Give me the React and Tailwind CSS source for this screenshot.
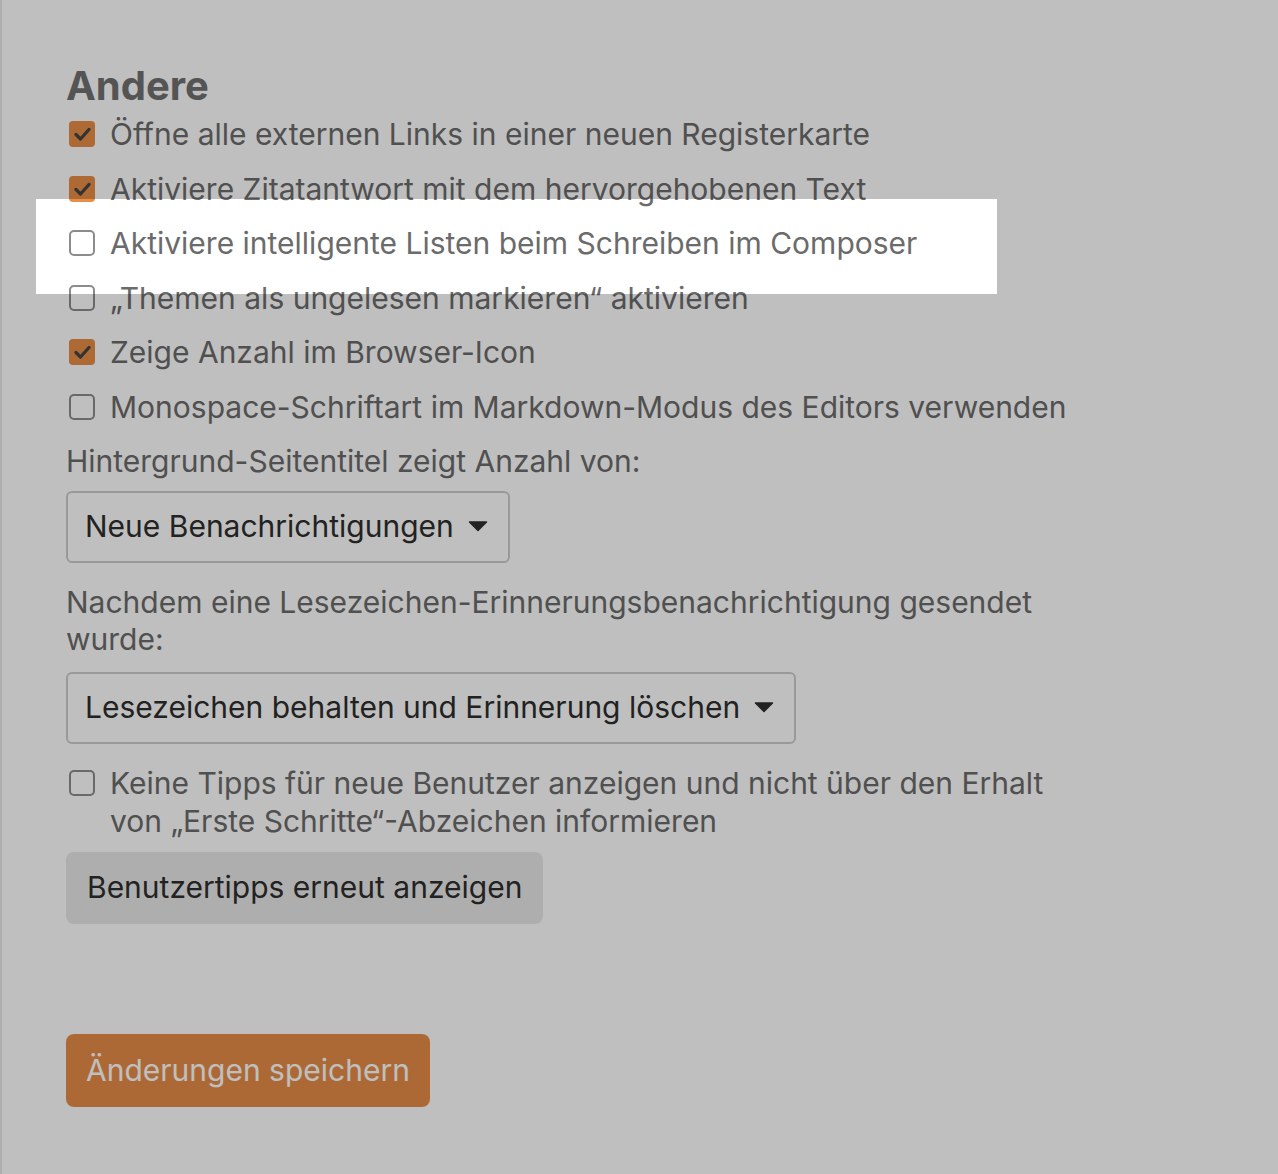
import React from "react";

const options = [
  { label: "Öffne alle externen Links in einer neuen Registerkarte", checked: true },
  { label: "Aktiviere Zitatantwort mit dem hervorgehobenen Text", checked: true },
  { label: "Aktiviere intelligente Listen beim Schreiben im Composer", checked: false, spotlight: true },
  { label: "„Themen als ungelesen markieren“ aktivieren", checked: false },
  { label: "Zeige Anzahl im Browser-Icon", checked: true },
  { label: "Monospace-Schriftart im Markdown-Modus des Editors verwenden", checked: false },
];

function Checkbox({ checked }) {
  if (checked) {
    return (
      <span className="mt-[6px] ml-[3px] flex h-[26px] w-[26px] shrink-0 items-center justify-center rounded-[4px] bg-[#e88e47]">
        <svg width="17" height="14" viewBox="0 0 17 14">
          <path d="M2 7.5 L6.5 12 L15 2.5" fill="none" stroke="#444" strokeWidth="3.2" strokeLinecap="round" strokeLinejoin="round" />
        </svg>
      </span>
    );
  }
  return (
    <span className="mt-[6px] ml-[3px] block h-[26px] w-[26px] shrink-0 rounded-[5px] border-2 border-[#8c8c8c] bg-white" />
  );
}

function Row({ label, checked, spotlight }) {
  return (
    <div className="relative flex items-start gap-[15px]">
      {spotlight && (
        <div className="pointer-events-none absolute -left-[30px] -top-[25px] z-10 h-[95px] w-[961px] shadow-[0_0_0_3000px_rgba(0,0,0,0.25)]" />
      )}
      <Checkbox checked={checked} />
      <span className="leading-[38px]">{label}</span>
    </div>
  );
}

function Select({ value }) {
  return (
    <div className="flex h-[72px] w-fit items-center gap-[14px] rounded-[6px] border-2 border-[#cdcdcd] bg-white pl-[17px] pr-[20px] text-[#2e2e2e]">
      <span>{value}</span>
      <svg width="20" height="11" viewBox="0 0 20 11">
        <path d="M1.5 1 L18.5 1 L10 9.5 Z" fill="#2e2e2e" stroke="#2e2e2e" strokeWidth="1.5" strokeLinejoin="round" />
      </svg>
    </div>
  );
}

export default function App() {
  return (
    <div
      className="min-h-screen border-l-2 border-[#eaeaea] bg-white text-[30px] text-[#6b6b6b]"
      style={{ fontFamily: "Inter, Roboto, 'Noto Sans', sans-serif" }}
    >
      <div className="w-[1072px] pl-[64px] pt-[61px]">
        <h2 className="text-[40px] font-bold leading-[50px] text-[#717171]">Andere</h2>

        <div className="mt-[4px] flex flex-col gap-[16.5px]">
          {options.map((o, i) => (
            <Row key={i} {...o} />
          ))}
        </div>

        <p className="mt-[16px] leading-[38px]">Hintergrund-Seitentitel zeigt Anzahl von:</p>
        <div className="mt-[11px]">
          <Select value="Neue Benachrichtigungen" />
        </div>

        <p className="mt-[21px] leading-[37px]">
          Nachdem eine Lesezeichen-Erinnerungsbenachrichtigung gesendet wurde:
        </p>
        <div className="mt-[14px]">
          <Select value="Lesezeichen behalten und Erinnerung löschen" />
        </div>

        <div className="mt-[20px] flex items-start gap-[15px]">
          <Checkbox checked={false} />
          <span className="leading-[38px]">
            Keine Tipps für neue Benutzer anzeigen und nicht über den Erhalt von „Erste Schritte“-Abzeichen informieren
          </span>
        </div>

        <button className="mt-[12px] h-[72px] rounded-[8px] bg-[#e9e9e9] px-[21px] text-[#2e2e2e]">
          Benutzertipps erneut anzeigen
        </button>

        <div className="mt-[110px]">
          <button className="h-[73px] rounded-[8px] bg-[#e78d47] px-[20px] text-white">
            Änderungen speichern
          </button>
        </div>
      </div>
    </div>
  );
}
